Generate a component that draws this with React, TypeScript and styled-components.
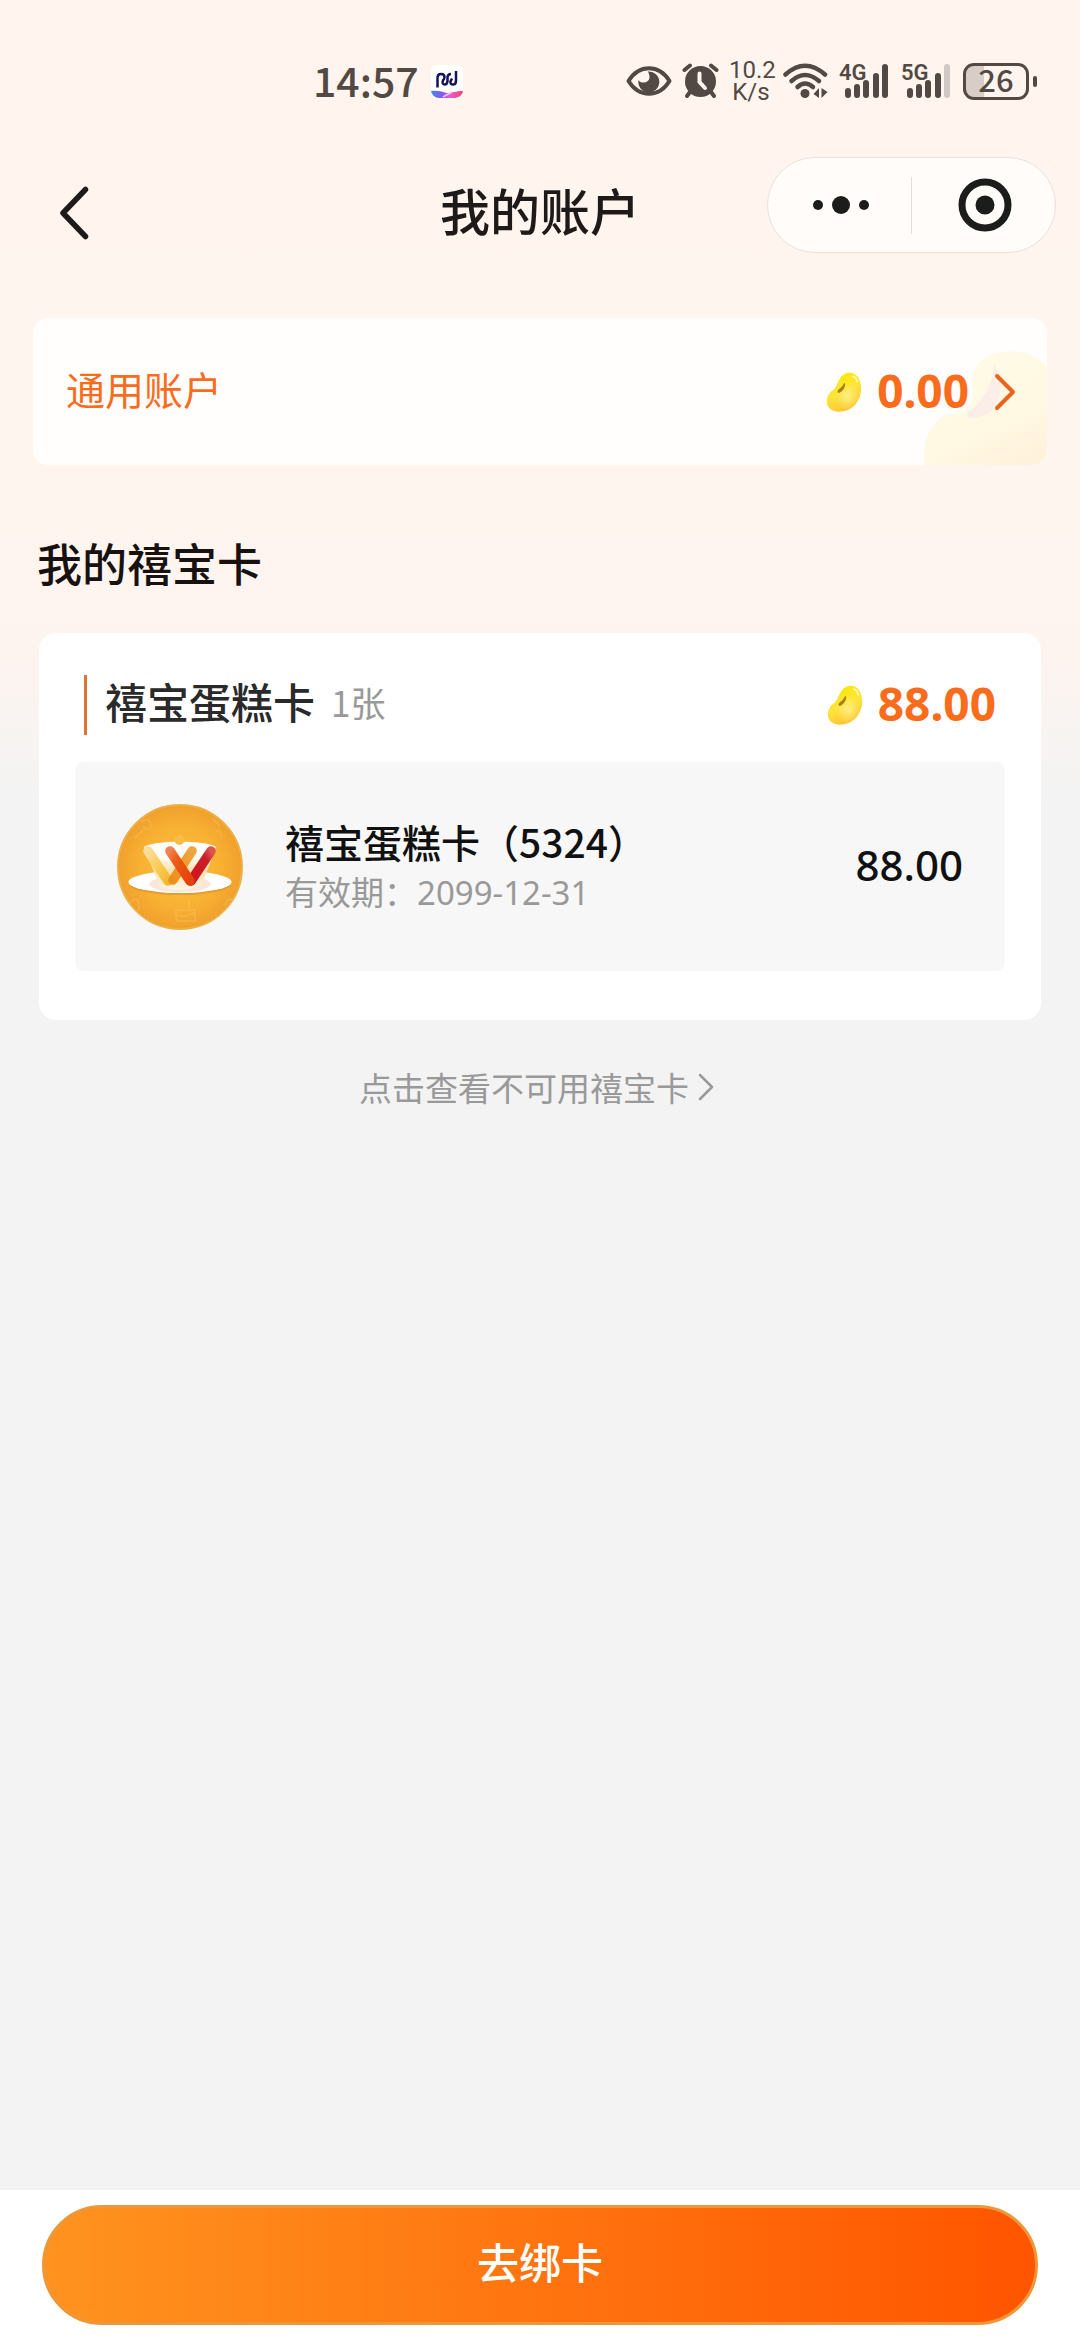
import React from "react";
import styled, { createGlobalStyle } from "styled-components";

const INK = "#534944";
const ORANGE = "#f96c1c";
const FIGURES = `"Noto Sans", "Noto Sans CJK SC", sans-serif`;

const GlobalStyle = createGlobalStyle`
  * { box-sizing: border-box; }
  body {
    margin: 0;
    background: #f3f3f3;
    font-family: "Noto Sans CJK SC", "Noto Sans", sans-serif;
    color: #111;
  }
  button { font-family: inherit; }
  h1, h2, h3, p { margin: 0; }
  svg { display: block; flex: none; }
`;

const Page = styled.div`
  min-height: 100vh;
  display: flex;
  flex-direction: column;
  background: linear-gradient(180deg, #fff5ee 0, #fff5ef 500px, #fdf4f0 660px, #f3f3f3 800px);
`;

/* ---------- status bar ---------- */

const StatusBar = styled.div`
  display: flex;
  align-items: center;
  justify-content: space-between;
  height: 108px;
  padding: 54px 43px 0 313px;
  color: ${INK};
`;

const StatusGroup = styled.div<{ $gap: number }>`
  display: flex;
  align-items: center;
  gap: ${(p) => p.$gap}px;
`;

const Clock = styled.time`
  font-size: 41px;
  line-height: 48px;
  font-weight: 500;
  padding-bottom: 4px;
`;

const NetSpeed = styled.div`
  width: 44px;
  font: 400 24px/22px Roboto, sans-serif;
  text-align: center;
`;

const SignalBox = styled.div`
  position: relative;
  width: 52px;
  height: 36px;
`;

const SignalLabel = styled.span`
  position: absolute;
  left: 0;
  top: 0;
  font: 600 22px/20px Roboto, sans-serif;
`;

const BatteryShell = styled.div`
  display: flex;
  align-items: center;
  gap: 4px;
`;

const BatteryBody = styled.div`
  display: grid;
  place-items: center;
  width: 66px;
  height: 37px;
  border: 3px solid ${INK};
  border-radius: 11px;
  background: linear-gradient(90deg, #d9cdc8 18px, transparent 18px);
  font-size: 31px;
  font-weight: 500;
`;

const BatteryLevel = styled.span`
  line-height: 25px;
  padding-bottom: 6px;
`;

const BatteryTip = styled.div`
  width: 4px;
  height: 11px;
  border-radius: 2px;
  background: ${INK};
`;

/* ---------- navigation ---------- */

const NavBar = styled.header`
  display: grid;
  grid-template-columns: 1fr auto 1fr;
  align-items: center;
  height: 104px;
  margin-top: 49px;
  padding: 0 24px;
`;

const BackButton = styled.button`
  align-self: end;
  display: grid;
  place-items: center;
  width: 100px;
  height: 96px;
  padding: 0;
  border: 0;
  background: none;
`;

const NavTitle = styled.h1`
  font-size: 50px;
  line-height: 64px;
  font-weight: 500;
  color: #1d1a19;
`;

const Capsule = styled.div`
  align-self: start;
  justify-self: end;
  display: flex;
  align-items: center;
  width: 289px;
  height: 96px;
  border: 1px solid #ebe0d9;
  border-radius: 48px;
  background: #fffcfa;
`;

const CapsuleButton = styled.button`
  flex: 1;
  display: grid;
  place-items: center;
  height: 94px;
  padding: 0 0 0 2px;
  border: 0;
  background: none;
`;

const CapsuleDivider = styled.div`
  width: 1px;
  height: 57px;
  background: #e3dcd8;
`;

/* ---------- content ---------- */

const Main = styled.main`
  flex: 1;
  display: flex;
  flex-direction: column;
  padding-top: 57px;
`;

const AccountCard = styled.a`
  position: relative;
  display: flex;
  align-items: center;
  justify-content: space-between;
  height: 147px;
  margin: 0 33px;
  padding: 0 31px 0 33px;
  border-radius: 15px;
  overflow: hidden;
  background: #fffefd;
  color: ${ORANGE};
  text-decoration: none;
`;

const AccountName = styled.span`
  font-size: 39px;
  line-height: 48px;
  padding-bottom: 8px;
`;

const AccountDecor = styled.div`
  position: absolute;
  right: 0;
  bottom: 0;
`;

const AccountValue = styled.div`
  position: relative;
  display: flex;
  align-items: center;
`;

const Balance = styled.strong`
  font-family: ${FIGURES};
  font-size: 46px;
  line-height: 52px;
  font-weight: 700;
  color: ${ORANGE};
  padding-bottom: 4px;
`;

const BalanceRow = styled.div`
  display: flex;
  align-items: center;
  gap: 15px;
`;

const ChevronSlot = styled.div`
  margin-left: 25px;
`;

const SectionTitle = styled.h2`
  margin: 66px 37px 38px;
  font-size: 45px;
  line-height: 64px;
  font-weight: 500;
  color: #17120f;
`;

const CardGroup = styled.section`
  margin: 0 39px;
  padding: 42px 36px 49px;
  border-radius: 17px;
  background: #fff;
`;

const GroupHead = styled.div`
  display: flex;
  align-items: center;
  justify-content: space-between;
  height: 60px;
  margin-bottom: 27px;
  padding: 0 9px;
`;

const GroupLabel = styled.div`
  display: flex;
  align-items: center;
  align-self: stretch;
  gap: 16px;
  padding-left: 18px;
  border-left: 3px solid #dd7436;
`;

const GroupName = styled.h3`
  font-size: 42px;
  line-height: 52px;
  font-weight: 500;
  color: #2a2a2a;
  padding-bottom: 8px;
`;

const GroupCount = styled.span`
  font-size: 35px;
  line-height: 52px;
  color: #999;
  padding-bottom: 6px;
`;

const CardItem = styled.article`
  display: flex;
  align-items: center;
  gap: 42px;
  height: 209px;
  padding: 0 42px;
  border-radius: 9px;
  background: #f7f7f7;
`;

const CardText = styled.div`
  flex: 1;
  padding-top: 4px;
`;

const CardName = styled.p`
  font-size: 39px;
  line-height: 48px;
  font-weight: 500;
`;

const CardExpiry = styled.p`
  font-family: ${FIGURES};
  font-size: 33px;
  line-height: 56px;
  color: #999;
`;

const CardAmount = styled.span`
  font-family: ${FIGURES};
  font-size: 42px;
  line-height: 48px;
  font-weight: 500;
  padding-bottom: 4px;
`;

const UnusableLink = styled.a`
  align-self: center;
  display: flex;
  align-items: center;
  gap: 8px;
  margin-top: 43px;
  padding-right: 6px;
  font-size: 33px;
  line-height: 48px;
  color: #999;
  text-decoration: none;
`;

const Footer = styled.footer`
  padding: 15px 42px;
  background: #fff;
`;

const BindButton = styled.button`
  display: block;
  width: 100%;
  height: 120px;
  padding: 0 0 8px;
  border: 3px solid #ee9739;
  border-radius: 60px;
  background: linear-gradient(90deg, #ff931f 0%, #ff5500 100%);
  color: #fff;
  font-size: 42px;
  line-height: 60px;
  font-weight: 500;
`;

/* ---------- drawings ---------- */

const AppBadge = () => (
  <svg width="32" height="33" viewBox="0 0 32 33" aria-hidden="true">
    <defs>
      <linearGradient id="swoosh" x1="0" x2="1">
        <stop offset="0" stopColor="#3d8bf5" />
        <stop offset=".35" stopColor="#8458f0" />
        <stop offset=".6" stopColor="#e85ad2" />
        <stop offset="1" stopColor="#fa3f6b" />
      </linearGradient>
    </defs>
    <rect width="32" height="33" rx="5" fill="#fff" />
    <path
      d="M6.500 22.500V13Q6.500 9 10 9Q13.500 9 13.500 12Q13.500 14 12 15.500Q10.500 19.500 14 19.500Q16 19.500 16.500 16V12Q17 9 20 9"
      fill="none"
      stroke="#14135c"
      strokeWidth="2.500"
    />
    <path
      d="M25 6V15.500Q25 19.500 22 19.500Q19 19.500 19.500 16.500L21 13.500"
      fill="none"
      stroke="#14135c"
      strokeWidth="2.500"
    />
    <path d="M0 26C8 25 11 27 16 28C21 28 25 26 32 26C31 31 27 33 23 33H8C4 33 1 30 0 26Z" fill="url(#swoosh)" />
    <path d="M12 32L21 27" stroke="#f3c5fa" strokeWidth="1.500" />
  </svg>
);

const EyeIcon = () => (
  <svg width="46" height="32" viewBox="0 0 46 32" aria-hidden="true">
    <path d="M2.500 16C13-1 33-1 43.500 16C33 33 13 33 2.500 16Z" fill="none" stroke={INK} strokeWidth="4" strokeLinejoin="round" />
    <path d="M22 6.500A10.500 10.500 0 1 1 12.500 15C15 19.500 24 18 23.500 11.500C23.300 9 22.500 8 22 6.500Z" fill={INK} />
  </svg>
);

const AlarmIcon = () => (
  <svg width="37" height="36" viewBox="0 0 37 36" aria-hidden="true">
    <circle cx="18.500" cy="18.500" r="15.500" fill={INK} />
    <path d="M2.500 7L8 2.500M34.500 7L29 2.500M8 29L5 33M29 29L32 33" stroke={INK} strokeWidth="4" strokeLinecap="round" />
    <path d="M17.500 10.500V19L23 25" fill="none" stroke="#fff5ee" strokeWidth="4" strokeLinecap="round" strokeLinejoin="round" />
  </svg>
);

const WifiIcon = () => (
  <svg width="46" height="36" viewBox="0 0 46 36" aria-hidden="true">
    <g fill="none" stroke={INK} strokeWidth="4.500" strokeLinecap="round">
      <path d="M2.500 11.500Q22-6 42 11.500" />
      <path d="M8.500 18Q22 6 36 18" />
      <path d="M14.500 24Q22 17 30 24" />
    </g>
    <circle cx="22" cy="30.500" r="4.500" fill={INK} />
    <path d="M36 25V35L30.500 31ZM38.500 25V35L44.500 29Z" fill={INK} />
  </svg>
);

const SIGNAL_BARS = [
  { x: 6, h: 10 },
  { x: 15, h: 14 },
  { x: 24, h: 18 },
  { x: 34, h: 25 },
  { x: 43, h: 34 },
];

const Signal = ({ label, level }: { label: string; level: number }) => (
  <SignalBox>
    <svg width="52" height="36" viewBox="0 0 52 36" aria-hidden="true">
      {SIGNAL_BARS.map((bar, i) => (
        <rect
          key={bar.x}
          x={bar.x}
          y={35 - bar.h}
          width="6"
          height={bar.h}
          rx="3"
          fill={i < level ? INK : "#d3c9c4"}
        />
      ))}
    </svg>
    <SignalLabel>{label}</SignalLabel>
  </SignalBox>
);

const Bean = () => (
  <svg width="36" height="40" viewBox="136 213 107 120" aria-hidden="true">
    <defs>
      <linearGradient id="bean" x1=".3" y1="0" x2=".7" y2="1">
        <stop offset="0" stopColor="#fbe800" />
        <stop offset=".5" stopColor="#fde43c" />
        <stop offset="1" stopColor="#fdbf33" />
      </linearGradient>
      <radialGradient id="beanShine" cx=".6" cy=".6" r=".35">
        <stop offset="0" stopColor="#ffee80" />
        <stop offset="1" stopColor="#ffee80" stopOpacity="0" />
      </radialGradient>
    </defs>
    <path
      d="M206 215C228 215 241 235 241 262C241 300 214 332 176 332C152 332 137 320 138 300C139 282 148 272 158 266C168 259 168 247 176 235C183 223 193 215 206 215Z"
      fill="url(#bean)"
    />
    <path
      d="M206 215C228 215 241 235 241 262C241 300 214 332 176 332C152 332 137 320 138 300C139 282 148 272 158 266C168 259 168 247 176 235C183 223 193 215 206 215Z"
      fill="url(#beanShine)"
    />
    <path d="M192 245C196 256 186 273 173 276C168 273 170 266 176 263C184 259 185 250 192 245Z" fill="#a8801c" />
    <path d="M216 226C224 229 228 236 229 243" fill="none" stroke="#fffbc4" strokeWidth="5" strokeLinecap="round" />
  </svg>
);

const BigBean = () => (
  <svg width="124" height="114" viewBox="431 155 372 342" aria-hidden="true">
    <defs>
      <linearGradient id="bigBean" x1=".3" y1="0" x2=".8" y2="1">
        <stop offset="0" stopColor="#fffbe6" />
        <stop offset=".6" stopColor="#fff9e3" />
        <stop offset="1" stopColor="#fff1dc" />
      </linearGradient>
    </defs>
    <path
      d="M436 500C430 430 445 380 490 352C525 332 560 350 575 310C585 275 570 240 590 205C610 170 650 156 700 156C750 156 780 175 805 210V500Z"
      fill="url(#bigBean)"
    />
    <path d="M645 194C658 215 672 260 658 300C648 335 610 362 572 355C555 348 563 337 578 328C615 300 640 250 645 194Z" fill="#fbeee8" />
  </svg>
);

const CardLogo = () => (
  <svg width="126" height="126" viewBox="0 0 126 126" role="img" aria-label="禧宝蛋糕卡">
    <defs>
      <radialGradient id="disc">
        <stop offset="0" stopColor="#fcbf3a" />
        <stop offset=".65" stopColor="#f8b133" />
        <stop offset="1" stopColor="#f0a02c" />
      </radialGradient>
      <linearGradient id="cup" x1="0" y1="0" x2="0" y2="1">
        <stop offset="0" stopColor="#fff" />
        <stop offset=".35" stopColor="#fffaf0" />
        <stop offset=".6" stopColor="#f8dfaa" />
        <stop offset="1" stopColor="#fff6e6" />
      </linearGradient>
      <linearGradient id="armA" x1="0" y1="0" x2="1" y2="1">
        <stop offset="0" stopColor="#fbdc9c" />
        <stop offset=".4" stopColor="#fbd063" />
        <stop offset="1" stopColor="#f5b72e" />
      </linearGradient>
      <linearGradient id="armB" x1="1" y1="0" x2="0" y2="1">
        <stop offset="0" stopColor="#f0a43c" />
        <stop offset="1" stopColor="#ee8f1d" />
      </linearGradient>
      <linearGradient id="armC" x1="0" y1="0" x2="1" y2="1">
        <stop offset="0" stopColor="#ee8253" />
        <stop offset=".3" stopColor="#ec5c12" />
        <stop offset="1" stopColor="#e5400f" />
      </linearGradient>
      <linearGradient id="armD" x1="1" y1="0" x2="0" y2="1">
        <stop offset="0" stopColor="#dd5550" />
        <stop offset=".25" stopColor="#c9202a" />
        <stop offset="1" stopColor="#d3131b" />
      </linearGradient>
    </defs>
    <circle cx="63" cy="63" r="62" fill="url(#disc)" stroke="#ecb049" strokeWidth="2" />
    <g fill="none" stroke="#f8c565" strokeWidth="2" opacity=".35">
      <path d="M18 34L26 26M24 18Q34 12 34 23Q30 28 26 22" />
      <path d="M96 15L103 22M98 29Q103 22 104 33" />
      <path d="M12 100Q22 88 22 106M108 102Q112 90 116 98" />
      <path d="M58 106H78V117H60ZM72 106V97M58 110L66 113L78 109" />
    </g>
    <ellipse cx="63" cy="80" rx="51" ry="11" fill="#d98d25" opacity=".6" />
    <ellipse cx="63" cy="78" rx="51.500" ry="11" fill="#fff" />
    <ellipse cx="63" cy="80" rx="31" ry="8" fill="#f9e9dd" />
    <path d="M27 43C36 36 90 36 99 43L86 78C78 88 48 88 42 80Z" fill="url(#cup)" />
    <circle cx="62.500" cy="36" r="5" fill="#f8bd49" />
    <g strokeLinecap="round" strokeWidth="9.500">
      <path d="M31 47L51 77" stroke="url(#armA)" />
      <path d="M75 47L56 76" stroke="url(#armB)" />
      <path d="M94 47L74 77" stroke="url(#armD)" />
      <path d="M53 47L73 77" stroke="url(#armC)" />
    </g>
  </svg>
);

const App = () => (
  <>
    <GlobalStyle />
    <Page>
      <StatusBar>
        <StatusGroup $gap={12}>
          <Clock>14:57</Clock>
          <AppBadge />
        </StatusGroup>
        <StatusGroup $gap={10}>
          <EyeIcon />
          <AlarmIcon />
          <NetSpeed>10.2 K/s</NetSpeed>
          <WifiIcon />
          <Signal label="4G" level={5} />
          <Signal label="5G" level={4} />
          <BatteryShell>
            <BatteryBody>
              <BatteryLevel>26</BatteryLevel>
            </BatteryBody>
            <BatteryTip />
          </BatteryShell>
        </StatusGroup>
      </StatusBar>

      <NavBar>
        <BackButton aria-label="返回">
          <svg width="30" height="54" viewBox="0 0 30 54" aria-hidden="true">
            <path d="M26.500 3.500L4 27L26.500 50.500" fill="none" stroke="#1d1a19" strokeWidth="5.500" strokeLinecap="round" strokeLinejoin="round" />
          </svg>
        </BackButton>
        <NavTitle>我的账户</NavTitle>
        <Capsule>
          <CapsuleButton aria-label="更多">
            <svg width="58" height="20" viewBox="0 0 58 20" aria-hidden="true" fill="#1c1c1a">
              <circle cx="6" cy="10" r="5" />
              <circle cx="29" cy="10" r="9" />
              <circle cx="52" cy="10" r="5" />
            </svg>
          </CapsuleButton>
          <CapsuleDivider />
          <CapsuleButton aria-label="关闭">
            <svg width="54" height="54" viewBox="0 0 54 54" aria-hidden="true">
              <circle cx="27" cy="27" r="23" fill="none" stroke="#1c1c1a" strokeWidth="7" />
              <circle cx="27" cy="27" r="9.500" fill="#1c1c1a" />
            </svg>
          </CapsuleButton>
        </Capsule>
      </NavBar>

      <Main>
        <AccountCard href="#account">
          <AccountDecor>
            <BigBean />
          </AccountDecor>
          <AccountName>通用账户</AccountName>
          <AccountValue>
            <BalanceRow>
              <Bean />
              <Balance>0.00</Balance>
            </BalanceRow>
            <ChevronSlot>
              <svg width="22" height="38" viewBox="0 0 22 38" aria-hidden="true">
                <path d="M3 3L19 19L3 35" fill="none" stroke="#e8651f" strokeWidth="4" strokeLinecap="round" strokeLinejoin="round" />
              </svg>
            </ChevronSlot>
          </AccountValue>
        </AccountCard>

        <SectionTitle>我的禧宝卡</SectionTitle>

        <CardGroup>
          <GroupHead>
            <GroupLabel>
              <GroupName>禧宝蛋糕卡</GroupName>
              <GroupCount>1张</GroupCount>
            </GroupLabel>
            <BalanceRow>
              <Bean />
              <Balance>88.00</Balance>
            </BalanceRow>
          </GroupHead>
          <CardItem>
            <CardLogo />
            <CardText>
              <CardName>禧宝蛋糕卡（5324）</CardName>
              <CardExpiry>有效期：2099-12-31</CardExpiry>
            </CardText>
            <CardAmount>88.00</CardAmount>
          </CardItem>
        </CardGroup>

        <UnusableLink href="#unusable">
          点击查看不可用禧宝卡
          <svg width="18" height="28" viewBox="0 0 18 28" aria-hidden="true">
            <path d="M3 2L15 14L3 26" fill="none" stroke="#999" strokeWidth="2.500" strokeLinecap="round" strokeLinejoin="round" />
          </svg>
        </UnusableLink>
      </Main>

      <Footer>
        <BindButton>去绑卡</BindButton>
      </Footer>
    </Page>
  </>
);

export default App;
